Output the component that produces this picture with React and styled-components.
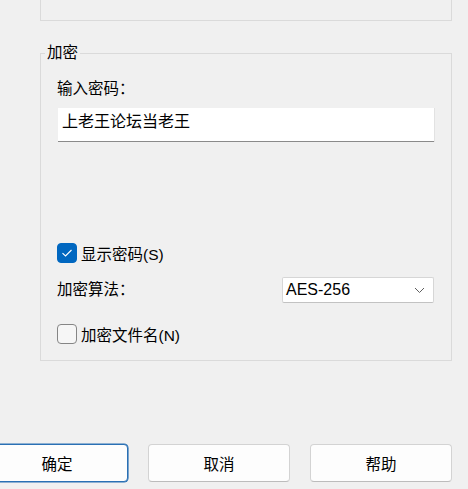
import React from "react";
import styled, { createGlobalStyle } from "styled-components";

const GlobalStyle = createGlobalStyle`
  html, body {
    margin: 0;
    padding: 0;
    background: #f0f0f0;
    overflow: hidden;
  }
  body {
    font-family: "Liberation Sans", "Noto Sans CJK SC", sans-serif;
    color: #000;
  }
  * { box-sizing: border-box; }
`;

const Page = styled.div`
  width: 468px;
  height: 489px;
  padding: 0 16px 0 40px;
  display: flex;
  flex-direction: column;
`;

const TopGroup = styled.div`
  height: 21px;
  border: 1px solid #dadada;
  border-top: none;
`;

const Group = styled.fieldset`
  margin: 23px 0 0 0;
  padding: 0 17px 16px 4px;
  border: 1px solid #dadada;
  min-width: 0;
`;

const Legend = styled.legend`
  padding: 0 2px;
  font-size: 15.5px;
  line-height: 18px;
`;

const Content = styled.div`
  padding-left: 12px;
  display: flex;
  flex-direction: column;
`;

const Label = styled.div`
  font-size: 15.5px;
  line-height: 20px;
  margin-top: ${(p) => p.$top || 0}px;
  white-space: nowrap;
`;

const PasswordInput = styled.input`
  margin: 9px 0 0 1px;
  width: 376px;
  height: 34px;
  padding: 0 0 10px 4px;
  border: none;
  border-bottom: 1px solid #8a8a8a;
  box-shadow: 1px 0 0 #e2e2e2;
  background: #fff;
  font-family: "Liberation Sans", "Noto Sans CJK SC", sans-serif;
  font-size: 16px;
  color: #000;
  outline: none;
`;

const CheckRow = styled.label`
  display: flex;
  align-items: center;
  gap: 4px;
  height: 20px;
  margin-top: ${(p) => p.$top || 0}px;
  font-size: 15.5px;
  white-space: nowrap;
`;

const Box = styled.span`
  width: 20px;
  height: 20px;
  border-radius: 4px;
  flex-shrink: 0;
  display: flex;
  align-items: center;
  justify-content: center;
  background: ${(p) => (p.$checked ? "#0067c0" : "#f6f6f6")};
  border: 1px solid ${(p) => (p.$checked ? "#0067c0" : "#858585")};
`;

const FieldRow = styled.div`
  display: flex;
  align-items: center;
  justify-content: space-between;
  width: 377px;
  margin-top: 14px;
`;

const Select = styled.div`
  width: 152px;
  height: 26px;
  background: #fff;
  border: 1px solid #d6d6d6;
  border-bottom-color: #c2c2c2;
  border-radius: 2px;
  display: flex;
  align-items: center;
  justify-content: space-between;
  padding: 0 8px 0 3px;
  font-size: 16px;
`;

const ButtonRow = styled.div`
  display: flex;
  justify-content: flex-end;
  gap: 20px;
  margin-top: 83px;
`;

const Button = styled.button`
  flex-shrink: 0;
  width: 142px;
  height: 38px;
  background: #fdfdfd;
  border: 1px solid ${(p) => (p.$primary ? "#2a70b4" : "#d3d3d3")};
  border-bottom-color: ${(p) => (p.$primary ? "#2a70b4" : "#bcbcbc")};
  box-shadow: ${(p) => (p.$primary ? "0 0 0 0.6px #2a70b4" : "none")};
  border-radius: 4px;
  font-family: "Liberation Sans", "Noto Sans CJK SC", sans-serif;
  font-size: 15.5px;
  color: #000;
  padding: 0;
`;

const Check = () => (
  <svg width="12" height="10" viewBox="0 0 12 10">
    <polyline points="1.5,5.2 4.5,8 10.5,2" fill="none" stroke="#fff" strokeWidth="1.1" />
  </svg>
);

const Chevron = () => (
  <svg width="11" height="7" viewBox="0 0 11 7">
    <polyline points="1,1 5.5,5.5 10,1" fill="none" stroke="#5f5f5f" strokeWidth="1" />
  </svg>
);

export default function App() {
  return (
    <>
      <GlobalStyle />
      <Page>
        <TopGroup />
        <Group>
          <Legend>加密</Legend>
          <Content>
            <Label $top={17}>输入密码：</Label>
            <PasswordInput readOnly value="上老王论坛当老王" />
            <CheckRow $top={101}>
              <Box $checked>
                <Check />
              </Box>
              显示密码(S)
            </CheckRow>
            <FieldRow>
              <Label>加密算法：</Label>
              <Select>
                <span>AES-256</span>
                <Chevron />
              </Select>
            </FieldRow>
            <CheckRow $top={21}>
              <Box />
              加密文件名(N)
            </CheckRow>
          </Content>
        </Group>
        <ButtonRow>
          <Button $primary>确定</Button>
          <Button>取消</Button>
          <Button>帮助</Button>
        </ButtonRow>
      </Page>
    </>
  );
}
